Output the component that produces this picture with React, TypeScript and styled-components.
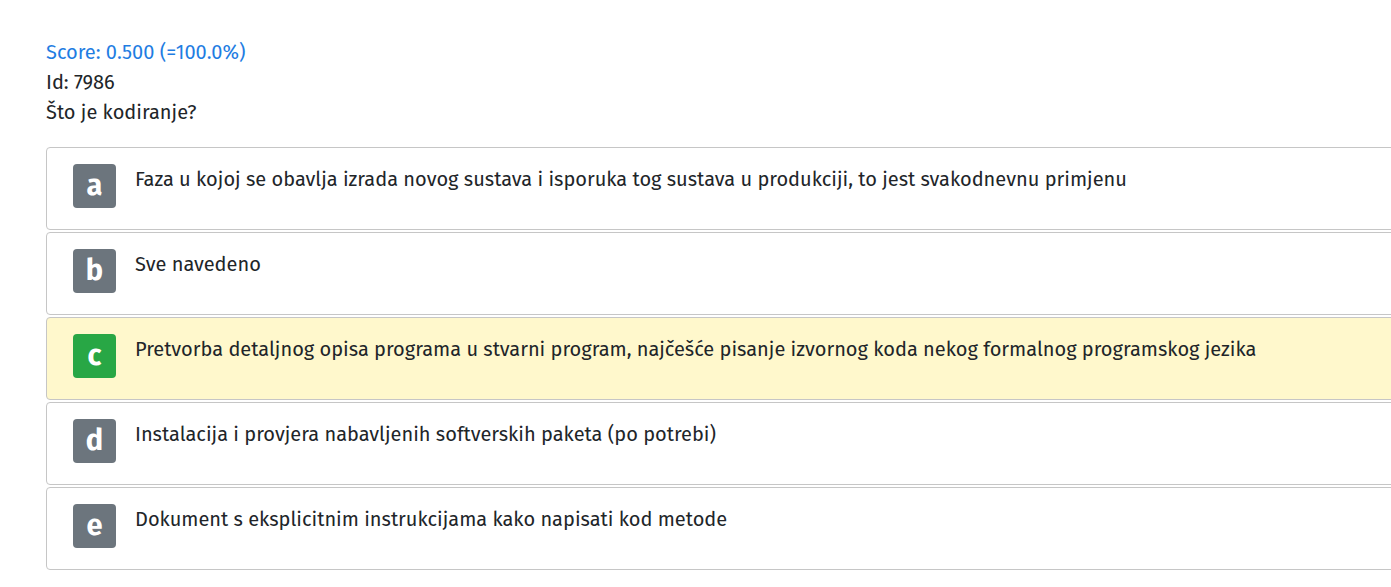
import React from "react";
import styled, { createGlobalStyle } from "styled-components";

const Global = createGlobalStyle`
  html, body {
    margin: 0;
    padding: 0;
    background: #ffffff;
    overflow: hidden;
  }
  body {
    font-family: "Fira Sans", "Lato", "Liberation Sans", sans-serif;
    color: #212529;
  }
`;

const Page = styled.div`
  padding: 37px 0 0 46px;
  width: 1380px;
`;

const InfoLine = styled.div<{ $accent?: boolean }>`
  font-size: 20px;
  line-height: 30px;
  color: ${(p) => (p.$accent ? "#1f7de2" : "#212529")};
`;

const List = styled.div`
  margin-top: 20px;
  display: flex;
  flex-direction: column;
  gap: 2px;
`;

const Card = styled.div<{ $correct?: boolean }>`
  display: flex;
  align-items: flex-start;
  gap: 19px;
  height: 83px;
  box-sizing: border-box;
  padding: 16px 0 0 26px;
  border: 1px solid #c6c6c6;
  border-radius: 4px;
  background: ${(p) => (p.$correct ? "#fff8cc" : "#ffffff")};
`;

const Badge = styled.div<{ $correct?: boolean }>`
  flex: none;
  width: 43px;
  height: 44px;
  border-radius: 4px;
  background: ${(p) => (p.$correct ? "#28a745" : "#6c757d")};
  color: #ffffff;
  font-size: 29px;
  font-weight: 700;
  display: flex;
  align-items: center;
  justify-content: center;
  line-height: 1;
  padding-bottom: 2px;
  box-sizing: border-box;
`;

const AnswerText = styled.div`
  font-size: 20px;
  line-height: 30px;
`;

const answers = [
  {
    key: "a",
    text: "Faza u kojoj se obavlja izrada novog sustava i isporuka tog sustava u produkciji, to jest svakodnevnu primjenu",
  },
  { key: "b", text: "Sve navedeno" },
  {
    key: "c",
    text: "Pretvorba detaljnog opisa programa u stvarni program, najčešće pisanje izvornog koda nekog formalnog programskog jezika",
    correct: true,
  },
  {
    key: "d",
    text: "Instalacija i provjera nabavljenih softverskih paketa (po potrebi)",
  },
  { key: "e", text: "Dokument s eksplicitnim instrukcijama kako napisati kod metode" },
];

export default function App() {
  return (
    <>
      <Global />
      <Page>
        <InfoLine $accent>Score: 0.500 (=100.0%)</InfoLine>
        <InfoLine>Id: 7986</InfoLine>
        <InfoLine>Što je kodiranje?</InfoLine>
        <List>
          {answers.map((a) => (
            <Card key={a.key} $correct={a.correct}>
              <Badge $correct={a.correct}>{a.key}</Badge>
              <AnswerText>{a.text}</AnswerText>
            </Card>
          ))}
        </List>
      </Page>
    </>
  );
}
